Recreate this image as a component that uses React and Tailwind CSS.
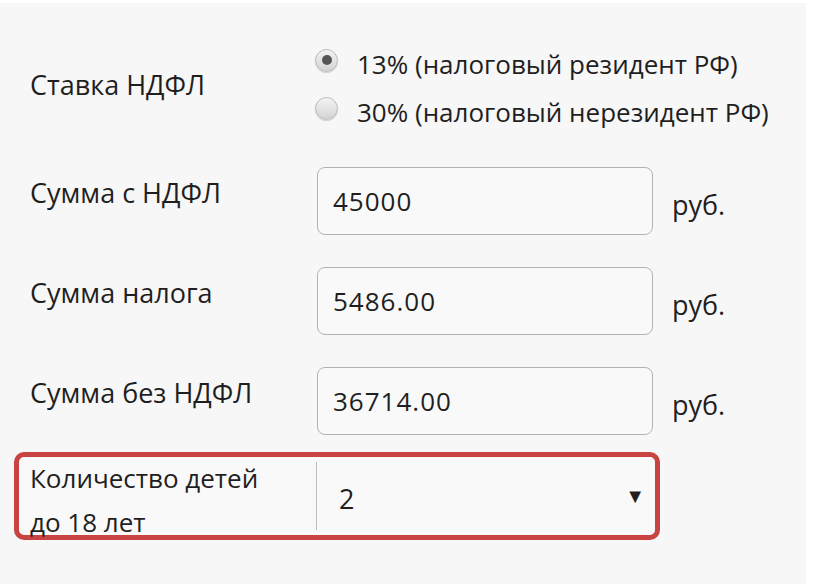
import React, { useState } from 'react';

const font = { fontFamily: '"Open Sans", "Noto Sans", sans-serif' };

function Radio({ checked }) {
  return (
    <span className="flex h-[23px] w-[23px] shrink-0 items-center justify-center rounded-full border border-[#b9b9b9] bg-gradient-to-b from-[#f4f4f4] to-[#d3d3d3] shadow-[0_1px_1px_rgba(0,0,0,0.15)]">
      {checked && <span className="h-[10px] w-[10px] rounded-full bg-[#555]" />}
    </span>
  );
}

function AmountRow({ label, value }) {
  return (
    <div className="flex h-[68px] items-center">
      <div className="w-[287px] self-start pt-[7px] text-[27px] leading-[38px]">{label}</div>
      <div className="flex h-[68px] w-[336px] items-center rounded-[8px] border border-[#b3b3b3] bg-[#f9f9f9] px-[15px] text-[26px] tracking-[1px]">
        {value}
      </div>
      <div className="ml-[19px] pt-[8px] text-[27px]">руб.</div>
    </div>
  );
}

export default function App() {
  const [rate, setRate] = useState(13);

  return (
    <div
      className="h-[584px] w-[816px] overflow-hidden bg-white pt-[3px] text-[#1f1f1f]"
      style={font}
    >
      <div className="h-[581px] w-[806px] bg-[#f7f7f7] pt-[41px]">
        <div className="flex pl-[30px]">
          <div className="w-[285px] pt-[22px] text-[27px] leading-[38px]">Ставка НДФЛ</div>
          <div className="flex flex-col gap-[16px]">
            {[13, 30].map((r) => (
              <label
                key={r}
                onClick={() => setRate(r)}
                className="flex h-[32px] cursor-pointer items-center gap-[19px] text-[26px] leading-[32px]"
              >
                <Radio checked={rate === r} />
                <span className="pt-[8px]">
                  {r === 13
                    ? '13% (налоговый резидент РФ)'
                    : '30% (налоговый нерезидент РФ)'}
                </span>
              </label>
            ))}
          </div>
        </div>

        <div className="mt-[43px] flex flex-col gap-[32px] pl-[30px]">
          <AmountRow label="Сумма с НДФЛ" value="45000" />
          <AmountRow label="Сумма налога" value="5486.00" />
          <AmountRow label="Сумма без НДФЛ" value="36714.00" />
        </div>

        <div className="ml-[14px] mt-[17px] flex h-[88px] w-[646px] rounded-[10px] border-[5px] border-[#c94343] bg-[#f9f9f9]">
          <div className="flex w-[297px] flex-col justify-center pl-[11px] pt-[8px] text-[26px] leading-[44px]">
            <span>Количество детей</span>
            <span>до 18 лет</span>
          </div>
          <div className="my-[5px] flex flex-1 items-center justify-between border-l border-[#bdbdbd] pl-[22px] pr-[10px]">
            <span className="pt-[6px] text-[27px]">2</span>
            <span className="text-[20px]">▼</span>
          </div>
        </div>
      </div>
    </div>
  );
}
